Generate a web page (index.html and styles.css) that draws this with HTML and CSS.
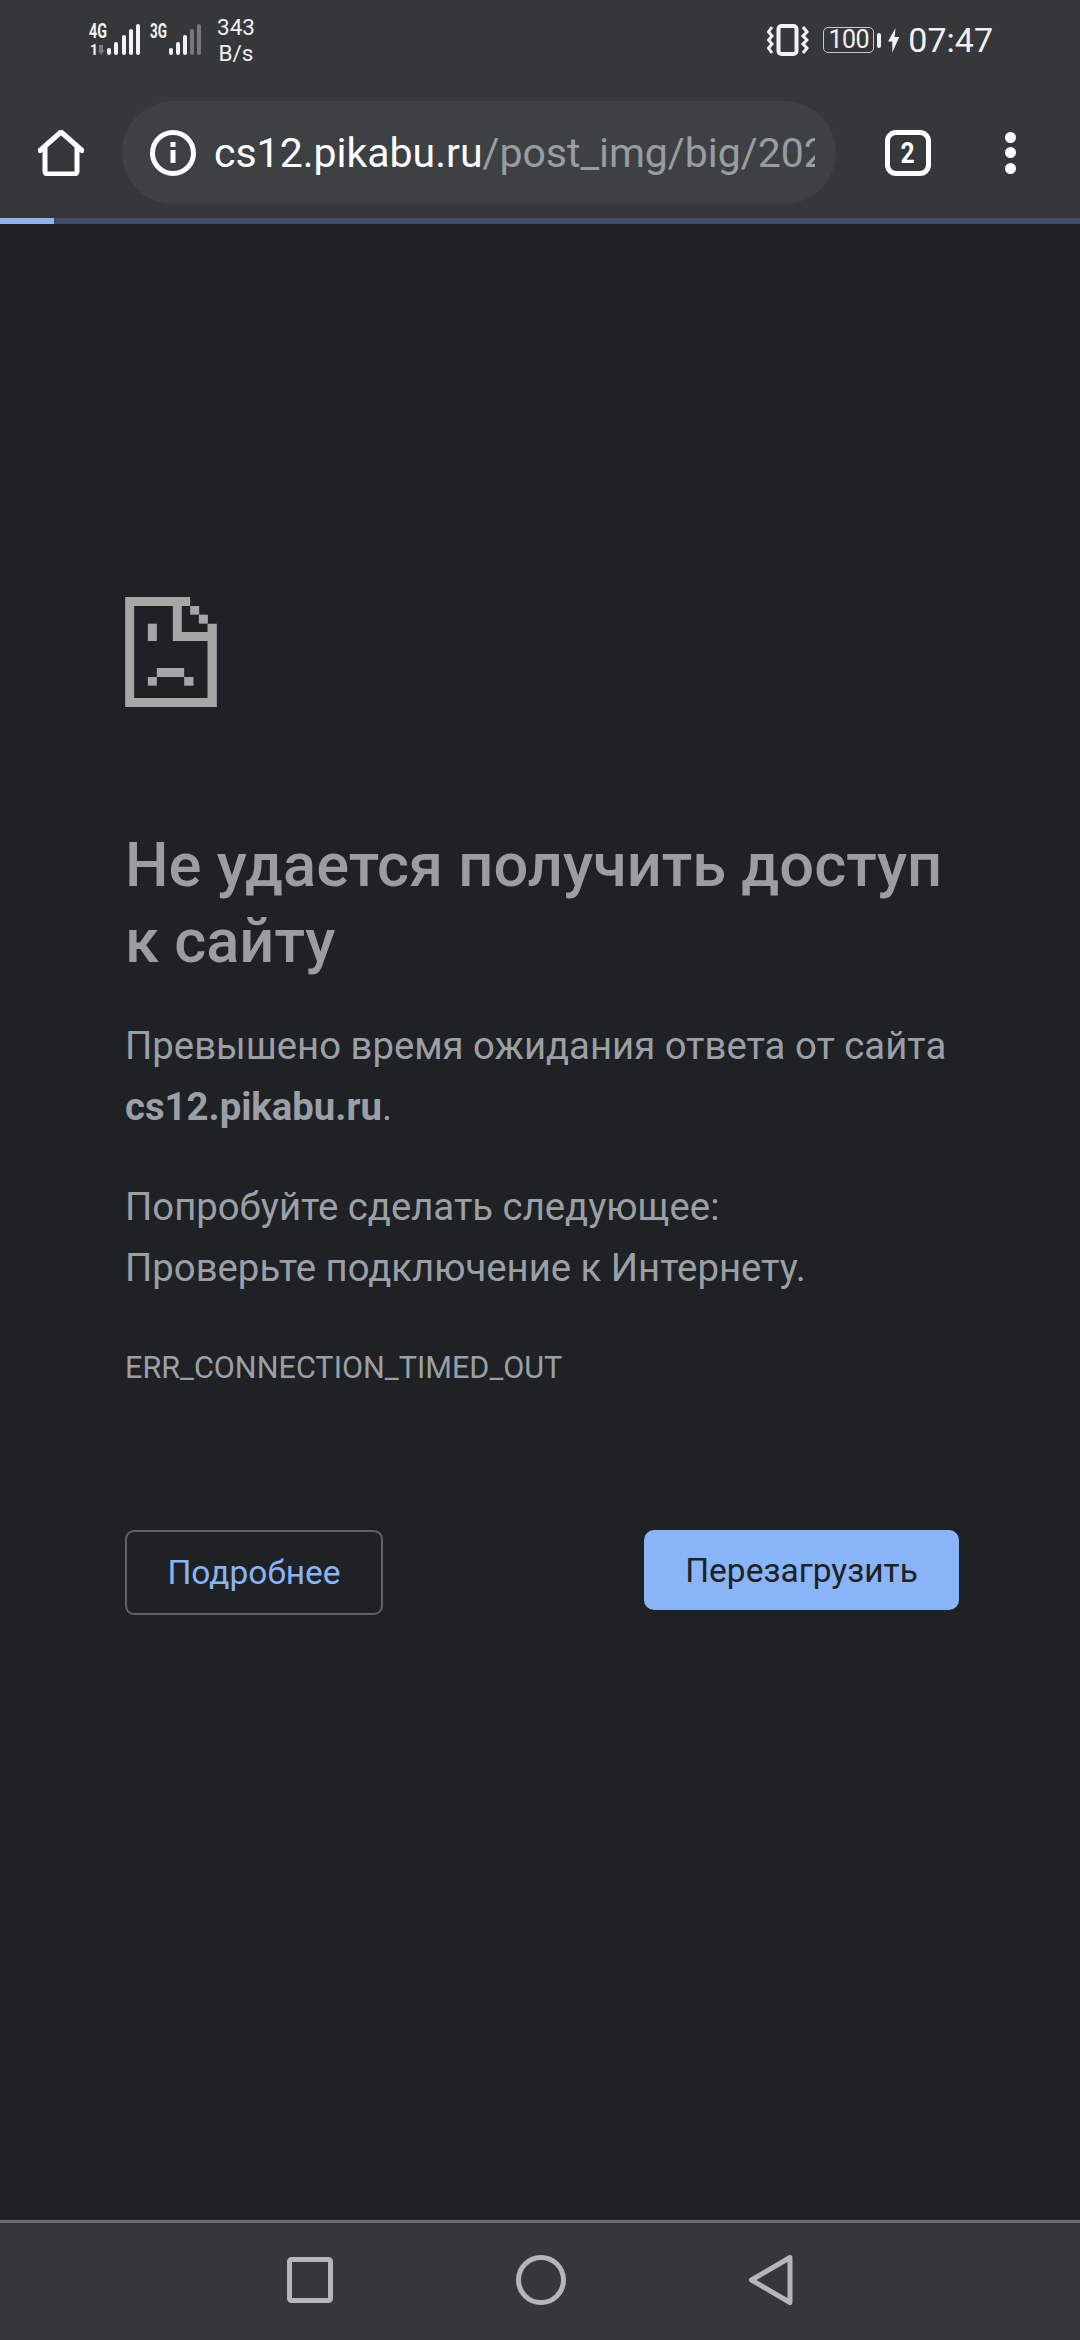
FILE: index.html
```html
<!DOCTYPE html>
<html lang="ru">
<head>
<meta charset="utf-8">
<title>cs12.pikabu.ru</title>
<link rel="stylesheet" href="styles.css">
</head>
<body>
<div class="app">
  <header class="chrome">
    <div class="status">
      <div class="status-left">
        <svg class="signal" width="120" height="40" viewBox="0 0 120 40">
          <text class="net" x="0" y="18" textLength="18" lengthAdjust="spacingAndGlyphs">4G</text>
          <text class="net-small" x="1" y="35">1</text>
          <path class="arrow" d="M10 25h4v5h2l-4 5-3-5h1z"/>
          <g class="bar-on">
            <rect x="18" y="28" width="4" height="7" rx="2"/><rect x="25" y="22" width="4" height="13" rx="2"/><rect x="33" y="15" width="4" height="20" rx="2"/><rect x="40" y="9" width="4" height="26" rx="2"/><rect x="47" y="4" width="4" height="31" rx="2"/>
          </g>
          <text class="net" x="61" y="18" textLength="17" lengthAdjust="spacingAndGlyphs">3G</text>
          <g class="bar-on">
            <rect x="80" y="28" width="4" height="7" rx="2"/><rect x="87" y="22" width="4" height="13" rx="2"/><rect x="94" y="15" width="4" height="20" rx="2"/>
          </g>
          <g class="bar-off">
            <rect x="101" y="9" width="4" height="26" rx="2"/><rect x="108" y="4" width="4" height="31" rx="2"/>
          </g>
        </svg>
        <div class="speed"><span>343</span><span>B/s</span></div>
      </div>
      <div class="status-right">
        <svg class="vibrate" width="42" height="32" viewBox="0 0 42 32">
          <rect class="phone" x="11.500" y="2" width="18" height="28" rx="3"/>
          <path class="wave" d="M5 3 1.500 8 5 12 1.500 16 5 20 1.500 24 5 29M36 3 40 8 36 12 40 16 36 20 40 24 36 29"/>
        </svg>
        <div class="battery"><div class="battery-box">100</div><div class="battery-nub"></div></div>
        <svg class="bolt" width="12" height="25" viewBox="0 0 12 25"><path d="M7.500 0 0 13.500H4.300V24.500L11.300 9H6.600Z"/></svg>
        <span class="time">07:47</span>
      </div>
    </div>
    <div class="toolbar">
      <svg class="home" width="46" height="46" viewBox="0 0 46 46">
        <path d="M2 20.500 23 2l21 18.500M7 17v24.500a2.500 2.500 0 0 0 2.500 2.500h27a2.500 2.500 0 0 0 2.500-2.500V17"/>
      </svg>
      <div class="omnibox">
        <svg class="info" width="46" height="46" viewBox="0 0 46 46">
          <circle cx="23" cy="23" r="20.500"/>
          <rect class="info-fill" x="20.500" y="20" width="5" height="13"/>
          <rect class="info-fill" x="20.500" y="12" width="5" height="5"/>
        </svg>
        <div class="url"><span class="host">cs12.pikabu.ru</span><span class="path">/post_img/big/202</span></div>
      </div>
      <div class="tabs"><span class="tabs-count">2</span></div>
      <div class="menu"><i></i><i></i><i></i></div>
    </div>
    <div class="progress"><div class="progress-fill"></div></div>
  </header>

  <main class="page">
    <svg class="sad" width="92" height="110" viewBox="45 35 275 330">
      <path d="M45 35H240V62H215V140H292V115H320V365H45ZM72 62V338H292V167H188V62Z"/>
      <rect x="240" y="62" width="27" height="26"/>
      <rect x="266" y="88" width="27" height="27"/>
      <rect x="113" y="115" width="27" height="52"/>
      <rect x="140" y="248" width="82" height="27"/>
      <rect x="113" y="275" width="27" height="26"/>
      <rect x="222" y="275" width="28" height="26"/>
    </svg>
    <h1 class="title">Не удается получить доступ к&nbsp;сайту</h1>
    <p class="text first">Превышено время ожидания ответа от сайта <b>cs12.pikabu.ru</b>.</p>
    <p class="text second">Попробуйте сделать следующее:<br>Проверьте подключение к Интернету.</p>
    <p class="code">ERR_CONNECTION_TIMED_OUT</p>
    <div class="actions">
      <button class="btn-details">Подробнее</button>
      <button class="btn-reload">Перезагрузить</button>
    </div>
  </main>

  <nav class="navbar">
    <svg width="46" height="46" viewBox="0 0 46 46"><rect class="nav-icon" x="2.500" y="2.500" width="41" height="41" rx="2"/></svg>
    <svg width="50" height="50" viewBox="0 0 50 50"><circle class="nav-icon" cx="25" cy="25" r="22.500"/></svg>
    <svg width="44" height="50" viewBox="0 0 44 50"><path class="nav-icon" d="M41 2.500 2.500 25 41 47.500Z"/></svg>
  </nav>
</div>
</body>
</html>
```
FILE: styles.css
```css
* { box-sizing: border-box; }
html, body { margin: 0; padding: 0; }
body { width: 1080px; height: 2340px; overflow: hidden; background: #1f2125; font-family: Roboto, sans-serif; }
.app { display: flex; flex-direction: column; height: 2340px; }

.chrome { background: #36373b; color: #fff; }
.status { height: 80px; display: flex; justify-content: space-between; align-items: center; padding: 0 87px 0 89px; }
.status-left, .status-right { display: flex; align-items: center; }
.signal { display: block; }
.net { font: 700 20px Roboto, sans-serif; fill: #f2f2f2; }
.net-small { font: 700 14px Roboto, sans-serif; fill: #f2f2f2; }
.arrow { fill: #77787b; }
.bar-on rect { fill: #f2f2f2; }
.bar-off rect { fill: #77787b; }
.speed { display: flex; flex-direction: column; align-items: center; margin-left: 8px; font-size: 22.500px; line-height: 26px; color: #f0f0f0; }
.vibrate { display: block; }
.phone, .wave { fill: none; stroke: #f2f2f2; stroke-width: 4; }
.wave { stroke-width: 3; stroke-linejoin: miter; }
.battery { display: flex; align-items: center; margin-left: 14px; }
.battery-box { width: 51px; height: 26px; border: 1.500px solid #c8c8ca; border-radius: 5px; font-size: 25px; line-height: 23px; text-align: center; color: #f0f0f0; letter-spacing: -0.500px; }
.battery-nub { width: 4px; height: 15px; margin-left: 3px; background: #f0f0f0; border-radius: 2px; }
.bolt { display: block; margin-left: 7px; fill: #f2f2f2; }
.time { margin-left: 8px; font-size: 34px; line-height: 40px; color: #f2f2f2; }

.toolbar { height: 138px; display: flex; align-items: center; padding: 21px 0 14px 38px; }
.home { display: block; margin-right: 38px; fill: none; stroke: #fff; stroke-width: 5; stroke-linecap: round; stroke-linejoin: round; }
.omnibox { width: 714px; height: 103px; display: flex; align-items: center; padding: 0 21px 0 28px; border-radius: 52px; background: #3e4144; }
.info { flex: none; display: block; fill: none; stroke: #fff; stroke-width: 5; }
.info-fill { fill: #fff; stroke: none; }
.url { flex: 1; margin-left: 18px; overflow: hidden; white-space: nowrap; font-size: 41px; line-height: 50px; }
.host { color: #fff; }
.path { color: #9a9d9f; }
.tabs { width: 46px; height: 46px; margin-left: 49px; border: 5px solid #fff; border-radius: 11px; text-align: center; font: 700 30px/36px Roboto, sans-serif; color: #fff; }
.tabs-count { display: inline-block; transform: scaleX(0.82); }
.menu { display: flex; flex-direction: column; gap: 4.500px; margin-left: 74px; }
.menu i { display: block; width: 11px; height: 11px; border-radius: 50%; background: #fff; }

.progress { height: 6px; background: #3f4d6b; }
.progress-fill { width: 54px; height: 6px; background: #8fb4ea; }

.page { flex: 1; padding: 373px 121px 0 125px; background: #1f2125; }
.sad { display: block; fill: #a6a6a6; }
.title { margin: 120px 0 0; font-size: 61.400px; line-height: 76px; font-weight: 500; color: #9a9ea2; }
.text { margin: 0; font-size: 38.300px; line-height: 61px; color: #9aa0a6; }
.text b { font-weight: 700; }
.first { margin-top: 36px; }
.second { margin-top: 39px; }
.code { margin: 50px 0 0; font-size: 30.600px; line-height: 40px; color: #9aa0a6; }
.actions { display: flex; justify-content: space-between; align-items: flex-start; margin-top: 142px; }
.btn-details { width: 258px; height: 85px; padding: 0; background: transparent; border: 2px solid #5f6368; border-radius: 9px; font: 400 33.500px Roboto, sans-serif; color: #8ab4f8; }
.btn-reload { width: 315px; height: 80px; padding: 0; background: #8ab4f8; border: 0; border-radius: 10px; font: 400 33.500px Roboto, sans-serif; color: #202124; }

.navbar { height: 120px; display: flex; align-items: center; padding: 0 0 4px 287px; background: #36373b; border-top: 3px solid #6a6b6e; gap: 183px; }
.navbar svg { display: block; }
.nav-icon { fill: none; stroke: #b5b6b8; stroke-width: 5; stroke-linejoin: round; }
```
